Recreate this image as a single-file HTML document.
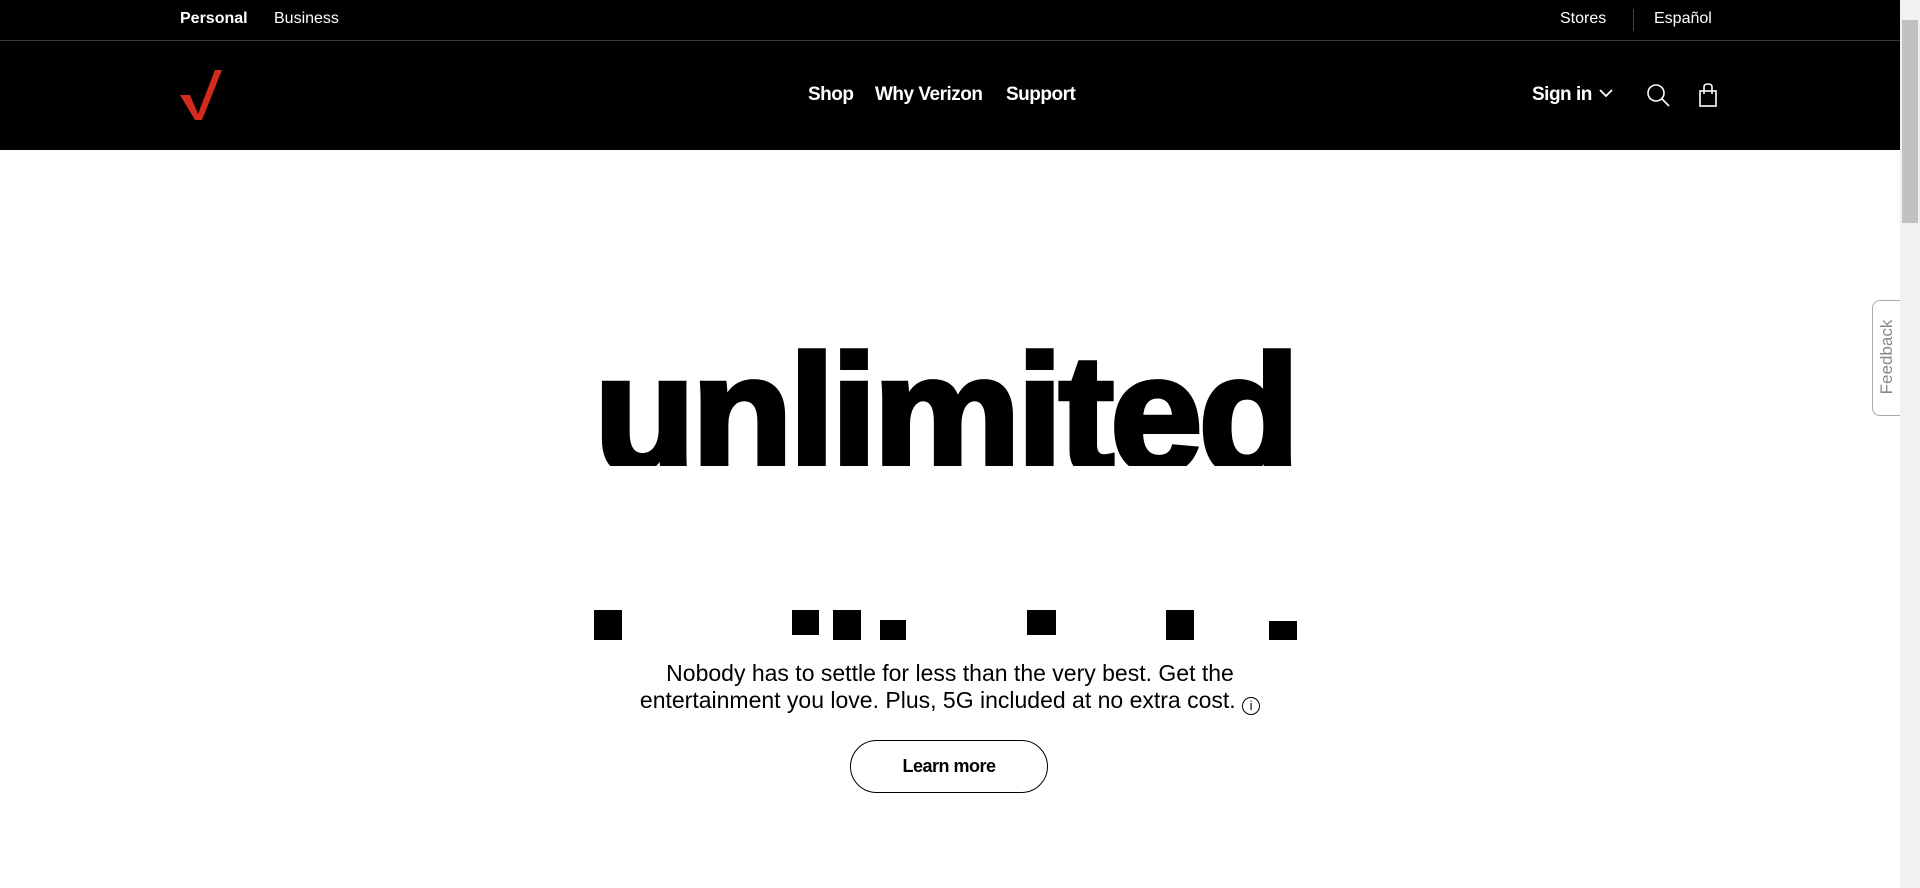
<!DOCTYPE html>
<html><head><meta charset="utf-8"><style>
*{margin:0;padding:0;box-sizing:border-box}
body{width:1920px;height:888px;overflow:hidden;background:#fff;font-family:"Liberation Sans",Arial,sans-serif;position:relative}
.top{position:absolute;left:0;top:0;width:1900px;height:41px;background:#000;border-bottom:1px solid #3a3a3a}
.top span{position:absolute;top:10px;color:#fff;font-size:16px}
.nav{position:absolute;left:0;top:41px;width:1900px;height:109px;background:#000}
.nav .l{position:absolute;top:43px;color:#fff;font-weight:bold;font-size:19px;letter-spacing:-0.5px}
.hero{position:absolute;left:0;width:1900px;text-align:center}
.big{top:330px;height:136px;overflow:hidden;font-weight:bold;font-size:166px;letter-spacing:-4px;line-height:170px;color:#000;-webkit-text-stroke:5px #000;text-indent:-10px}
.sq{position:absolute;background:#000}
p.t{position:absolute;left:0;width:1900px;top:660px;text-align:center;font-size:23px;line-height:27px;color:#000;letter-spacing:0}
.btn{position:absolute;left:850px;top:740px;width:198px;height:53px;border:1px solid #000;border-radius:27px;text-align:center;line-height:51px;font-weight:bold;font-size:18px;letter-spacing:-0.5px}
.sb{position:absolute;left:1900px;top:0;width:20px;height:888px;background:#f1f1f1}
.thumb{position:absolute;left:1902px;top:20px;width:16px;height:203px;background:#c1c1c1}
.fb{position:absolute;left:1872px;top:300px;width:29px;height:116px;border:1px solid #aaa;border-right:none;border-radius:8px 0 0 8px;background:#fff}
.fb span{position:absolute;left:-40px;top:46px;width:108px;transform:rotate(-90deg);text-align:center;color:#888;font-size:17px}
</style></head><body>
<div class="top">
<span style="left:180px;font-weight:bold">Personal</span>
<span style="left:274px">Business</span>
<span style="left:1560px">Stores</span>
<div style="position:absolute;left:1633px;top:9px;width:1px;height:22px;background:#444"></div>
<span style="left:1654px">Español</span>
</div>
<div class="nav">
<svg style="position:absolute;left:0;top:-41px" width="240" height="150"><path d="M180,95 L190,95 L198,114 L215,70 L222,70 L202,120 L195,120 Z" fill="#d52b1e"/></svg>
<span class="l" style="left:808px">Shop</span>
<span class="l" style="left:875px">Why Verizon</span>
<span class="l" style="left:1006px">Support</span>
<span class="l" style="left:1532px">Sign in</span>
<svg style="position:absolute;left:1598px;top:46px" width="16" height="12"><path d="M2,3 L8,9 L14,3" stroke="#fff" stroke-width="1.8" fill="none"/></svg>
<svg style="position:absolute;left:1645px;top:41px" width="26" height="26"><circle cx="11" cy="11" r="8" stroke="#fff" stroke-width="1.6" fill="none"/><path d="M17,17 L24,24" stroke="#fff" stroke-width="1.6"/></svg>
<svg style="position:absolute;left:1698px;top:41px" width="22" height="26"><rect x="2" y="9" width="16" height="15" stroke="#fff" stroke-width="1.6" fill="none"/><path d="M6,12 V5 Q6,2 10,2 Q14,2 14,5 V12" stroke="#fff" stroke-width="1.6" fill="none"/></svg>
</div>
<div class="hero big">unlimited</div>
<div class="sq" style="left:594px;top:610px;width:28px;height:30px"></div>
<div class="sq" style="left:792px;top:610px;width:27px;height:25px"></div>
<div class="sq" style="left:833px;top:610px;width:28px;height:30px"></div>
<div class="sq" style="left:880px;top:620px;width:26px;height:20px"></div>
<div class="sq" style="left:1027px;top:610px;width:29px;height:25px"></div>
<div class="sq" style="left:1166px;top:610px;width:28px;height:30px"></div>
<div class="sq" style="left:1269px;top:621px;width:28px;height:19px"></div>
<p class="t">Nobody has to settle for less than the very best. Get the<br>entertainment you love. Plus, 5G included at no extra cost. <span style="display:inline-block;width:18px;height:18px;border:1.5px solid #000;border-radius:50%;font-size:13px;line-height:15px;vertical-align:-2px">i</span></p>
<div class="btn">Learn more</div>
<div class="fb"><span>Feedback</span></div>
<div class="sb"></div><div class="thumb"></div>
</body></html>
